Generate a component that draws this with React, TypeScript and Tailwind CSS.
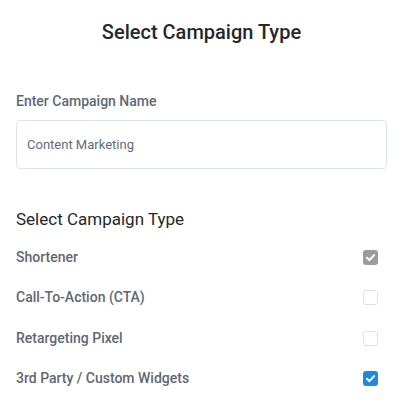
const types = [
  { label: 'Shortener', state: 'disabled' },
  { label: 'Call-To-Action (CTA)', state: 'off' },
  { label: 'Retargeting Pixel', state: 'off' },
  { label: '3rd Party / Custom Widgets', state: 'on' },
]

function Check({ state }: { state: string }) {
  if (state === 'off') {
    return <span className="block h-[15px] w-[15px] rounded-[3px] border border-[#dfe1e5] bg-white" />
  }
  return (
    <span
      className={
        state === 'on'
          ? 'flex h-[15px] w-[15px] items-center justify-center rounded-[3px] bg-[#1e88e5]'
          : 'flex h-[15px] w-[15px] items-center justify-center rounded-[3px] bg-[#9b9b9b]'
      }
    >
      <svg width="11" height="11" viewBox="0 0 12 12" fill="none">
        <path d="M2.2 6.3 L4.9 8.9 L9.9 3.4" stroke="white" strokeWidth="2.2" strokeLinecap="round" strokeLinejoin="round" />
      </svg>
    </span>
  )
}

export default function App() {
  return (
    <div className="min-h-[415px] w-[403px] bg-white px-4 font-['Roboto',sans-serif]">
      <h1 className="pt-[18px] text-center text-[20px] leading-7 font-medium text-[#25282b]">Select Campaign Type</h1>

      <label className="mt-[45px] block text-[14px] leading-5 font-medium text-[#5f6775]">Enter Campaign Name</label>
      <div className="mt-[9px] flex h-[49px] items-center rounded border border-[#dfe3ea] px-[10px]">
        <span className="text-[13px] text-[#5f6b7c]">Content Marketing</span>
      </div>

      <h2 className="mt-[38px] text-[17px] leading-6 font-normal text-[#25282b]">Select Campaign Type</h2>

      <div className="mt-[6px] flex flex-col">
        {types.map((t) => (
          <div key={t.label} className="flex h-[40.5px] items-center justify-between pr-[9px]">
            <span className="text-[14px] font-medium text-[#5f6775]">{t.label}</span>
            <Check state={t.state} />
          </div>
        ))}
      </div>
    </div>
  )
}
